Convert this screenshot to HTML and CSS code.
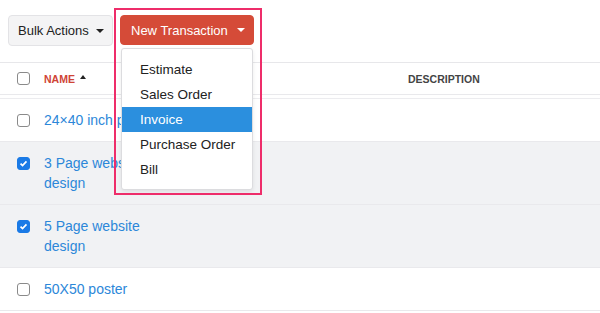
FILE: index.html
```html
<!DOCTYPE html>
<html lang="en">
<head>
  <meta charset="UTF-8">
  <title>Products</title>
  <link rel="stylesheet" href="styles.css">
</head>
<body>

<div class="toolbar">
  <button class="btn btn-light">Bulk Actions <span class="caret"></span></button>
  <div class="menu-wrap">
    <button class="btn btn-red">New Transaction <span class="caret"></span></button>
    <ul class="dropdown">
      <li>Estimate</li>
      <li>Sales Order</li>
      <li class="active">Invoice</li>
      <li>Purchase Order</li>
      <li>Bill</li>
    </ul>
    <div class="highlight"></div>
  </div>
</div>

<div class="table">
  <div class="row head">
    <div class="cell-check"><span class="check"></span></div>
    <div class="cell-name">NAME <span class="sort"></span></div>
    <div class="cell-desc">DESCRIPTION</div>
  </div>
  <div class="spacer"></div>
  <div class="row">
    <div class="cell-check"><span class="check"></span></div>
    <div class="cell-name"><a>24×40 inch poster</a></div>
    <div class="cell-desc"></div>
  </div>
  <div class="row selected">
    <div class="cell-check"><span class="check on"></span></div>
    <div class="cell-name"><a>3 Page website design</a></div>
    <div class="cell-desc"></div>
  </div>
  <div class="row selected">
    <div class="cell-check"><span class="check on"></span></div>
    <div class="cell-name"><a>5 Page website design</a></div>
    <div class="cell-desc"></div>
  </div>
  <div class="row">
    <div class="cell-check"><span class="check"></span></div>
    <div class="cell-name"><a>50X50 poster</a></div>
    <div class="cell-desc"></div>
  </div>
</div>

</body>
</html>
```

FILE: styles.css
```css
/* ============================
   Base
============================ */
* {
  box-sizing: border-box;
}

body {
  margin: 0;
  font-family: "Liberation Sans", Arial, sans-serif;
  font-size: 14px;
  color: #333;
  background: #fff;
  overflow: hidden;
}

/* ============================
   Toolbar + buttons
============================ */
.toolbar {
  display: flex;
  align-items: flex-start;
  gap: 7px;
  padding: 15px 0 0 8px;
  height: 62px;
}

.btn {
  font-family: inherit;
  font-size: 13px;
  height: 31px;
  padding: 0 8px 0 9px;
  border-radius: 4px;
  display: inline-flex;
  align-items: center;
  justify-content: space-between;
  white-space: nowrap;
  cursor: pointer;
}

.btn-light {
  width: 105px;
  background: #f4f4f5;
  border: 1px solid #e3e3e6;
  color: #222;
}

.btn-red {
  width: 134px;
  background: #d54b38;
  border: 1px solid #d54b38;
  color: #fff;
  height: 30px;
  padding: 0 8px 0 10px;
}

.caret {
  display: inline-block;
  flex-shrink: 0;
  width: 0;
  height: 0;
  border-left: 4px solid transparent;
  border-right: 4px solid transparent;
  border-top: 4px solid currentColor;
}

.menu-wrap {
  position: relative;
}

.dropdown {
  position: absolute;
  top: 33px;
  left: 1px;
  width: 132px;
  margin: 0;
  padding: 8px 0 7px;
  list-style: none;
  background: #fff;
  border: 1px solid #dcdcdf;
  border-radius: 3px;
  box-shadow: 0 2px 4px rgba(0,0,0,0.08);
  z-index: 2;
}

.dropdown li {
  height: 25px;
  line-height: 25px;
  padding-left: 18px;
  font-size: 13.5px;
  color: #222;
}

.dropdown li.active {
  background: #2b8fde;
  color: #fff;
}

.highlight {
  position: absolute;
  top: -7px;
  left: -6px;
  width: 148px;
  height: 187px;
  border: 2px solid #ee2d6a;
  z-index: 3;
  pointer-events: none;
}

/* ============================
   Table
============================ */
.table {
  border-top: 1px solid #e7e7ea;
}

.row {
  display: grid;
  grid-template-columns: 44px 364px 1fr;
  align-items: start;
  padding: 11px 0;
  border-bottom: 1px solid #e9e9ec;
  line-height: 20px;
}

.row.head {
  height: 32px;
  padding: 0;
  align-items: center;
  line-height: 14px;
}

.spacer {
  height: 4px;
  border-bottom: 1px solid #ececef;
}

.row.selected {
  background: #f1f2f4;
}

.cell-check {
  padding-left: 17px;
  height: 20px;
  display: flex;
  align-items: center;
}

.head .cell-check {
  height: auto;
}

.check {
  width: 13px;
  height: 13px;
  border: 1px solid #8a8a8a;
  border-radius: 3px;
  background: #fff;
  display: inline-block;
}

.check.on {
  border-color: #1a7ae6;
  background: #1a7ae6 url("data:image/svg+xml,%3Csvg xmlns='http://www.w3.org/2000/svg' viewBox='0 0 13 13'%3E%3Cpath d='M3 6.6l2.4 2.4 4.6-5' fill='none' stroke='white' stroke-width='2'/%3E%3C/svg%3E") center/100% no-repeat;
}

.cell-name a {
  display: block;
  max-width: 125px;
  color: #2c87d9;
  font-size: 14px;
}

.head .cell-name {
  font-size: 10.5px;
  font-weight: bold;
  color: #cf4436;
  display: flex;
  align-items: center;
  gap: 5px;
}

.sort {
  display: inline-block;
  width: 0;
  height: 0;
  border-left: 3px solid transparent;
  border-right: 3px solid transparent;
  border-bottom: 4px solid #222;
  position: relative;
  top: -2px;
}

.head .cell-desc {
  font-size: 10.5px;
  font-weight: bold;
  color: #444;
}
```
